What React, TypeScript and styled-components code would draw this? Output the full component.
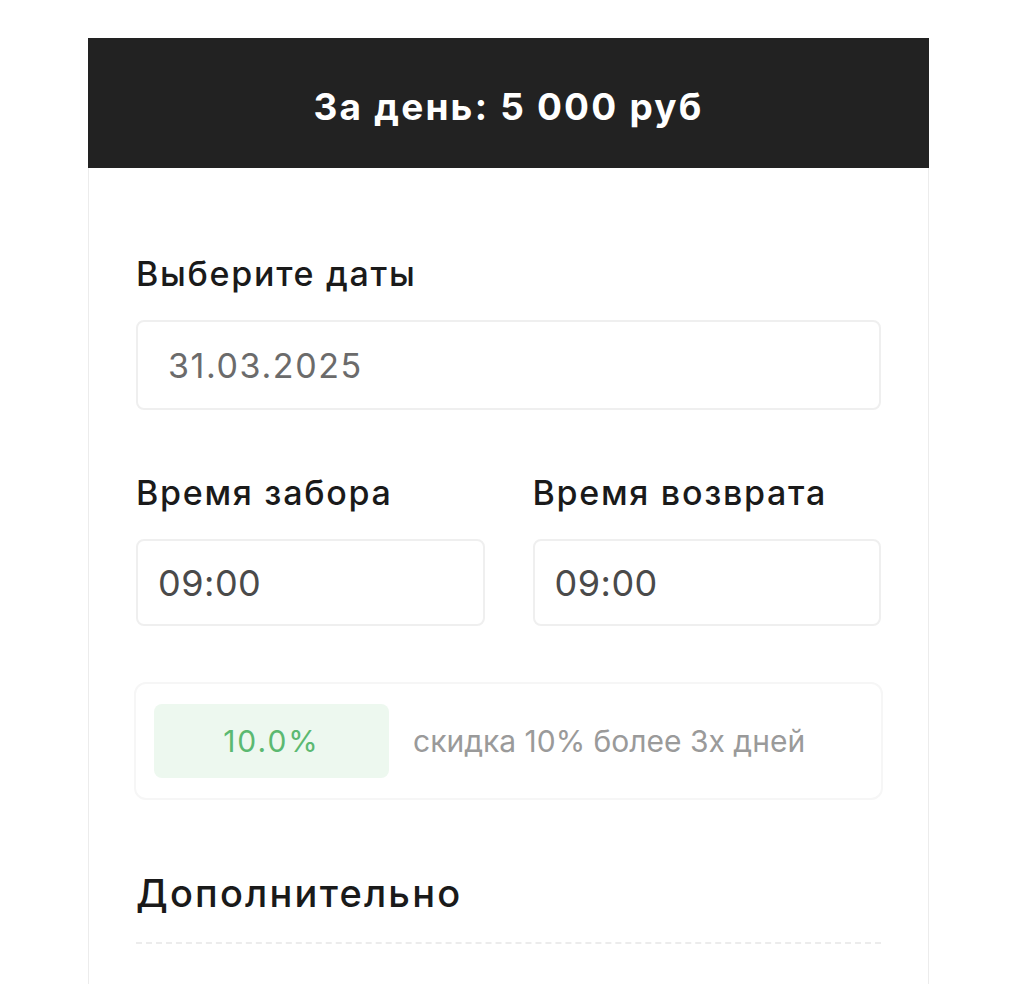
import React from "react";
import styled, { createGlobalStyle } from "styled-components";

const Global = createGlobalStyle`
  html, body { margin: 0; padding: 0; background: #fff; }
  body { font-family: Inter, "Liberation Sans", Arial, sans-serif; }
  * { box-sizing: border-box; }
`;

const Page = styled.div`
  padding: 38px 0 0 88px;
`;

const Card = styled.div`
  width: 841px;
  border: 1px solid #ececec;
  border-top: none;
  min-height: 960px;
  background: #fff;
`;

const Header = styled.div`
  height: 130px;
  padding-top: 6px;
  background: #222;
  color: #fff;
  display: flex;
  align-items: center;
  justify-content: center;
  font-size: 37px;
  font-weight: 700;
  letter-spacing: 2.2px;
  margin: 0 -1px;
`;

const Body = styled.div`
  padding: 86px 47px 0 47px;
  display: flex;
  flex-direction: column;
`;

const Label = styled.div`
  font-size: 34px;
  font-weight: 500;
  color: #1a1a1a;
  line-height: 40px;
  letter-spacing: 1.7px;
  margin-bottom: 26px;
`;

const Input = styled.div<{ $pad?: number; $h?: number; $muted?: boolean; $size?: number; $ls?: number }>`
  height: ${(p) => p.$h ?? 90}px;
  border: 2px solid #efefef;
  border-radius: 8px;
  display: flex;
  align-items: center;
  padding-left: ${(p) => p.$pad ?? 30}px;
  font-size: ${(p) => p.$size ?? 34}px;
  letter-spacing: ${(p) => p.$ls ?? 1.6}px;
  color: ${(p) => (p.$muted ? "#6b6b6b" : "#4a4a4a")};
`;

const Row = styled.div`
  display: grid;
  grid-template-columns: 1fr 1fr;
  gap: 48px;
  margin-top: 63px;
`;

const Field = styled.div`
  display: flex;
  flex-direction: column;
`;

const Discount = styled.div`
  margin: 56px -2px 0;
  height: 118px;
  border: 2px solid #f6f6f6;
  border-radius: 12px;
  display: flex;
  align-items: center;
  padding: 0 18px;
  gap: 24px;
`;

const Badge = styled.div`
  width: 235px;
  height: 74px;
  background: #edf8ef;
  border-radius: 8px;
  color: #5bb971;
  font-size: 30px;
  letter-spacing: 2px;
  display: flex;
  align-items: center;
  justify-content: center;
`;

const Note = styled.div`
  font-size: 30px;
  color: #9a9a9a;
`;

const Section = styled.div`
  margin-top: 70px;
  font-size: 38px;
  font-weight: 500;
  color: #1a1a1a;
  line-height: 46px;
  letter-spacing: 2.2px;
  padding-bottom: 26px;
  border-bottom: 2px dashed #ececec;
`;

export default function App() {
  return (
    <>
      <Global />
      <Page>
        <Card>
          <Header>За день: 5 000 руб</Header>
          <Body>
            <Label>Выберите даты</Label>
            <Input $muted>31.03.2025</Input>
            <Row>
              <Field>
                <Label>Время забора</Label>
                <Input $pad={20} $h={87} $size={36} $ls={0.5}>09:00</Input>
              </Field>
              <Field>
                <Label>Время возврата</Label>
                <Input $pad={20} $h={87} $size={36} $ls={0.5}>09:00</Input>
              </Field>
            </Row>
            <Discount>
              <Badge>10.0%</Badge>
              <Note>скидка 10% более 3х дней</Note>
            </Discount>
            <Section>Дополнительно</Section>
          </Body>
        </Card>
      </Page>
    </>
  );
}
